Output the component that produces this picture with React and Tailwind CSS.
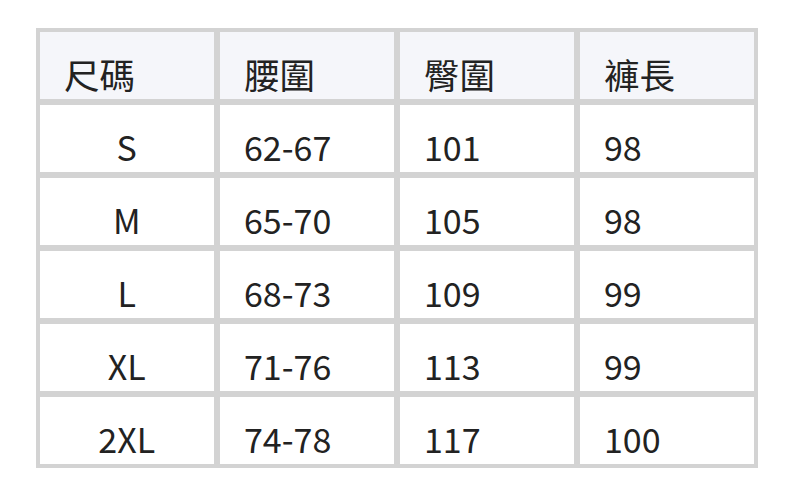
import React from "react";

const headers = ["尺碼", "腰圍", "臀圍", "褲長"];

const rows = [
  ["S", "62-67", "101", "98"],
  ["M", "65-70", "105", "98"],
  ["L", "68-73", "109", "99"],
  ["XL", "71-76", "113", "99"],
  ["2XL", "74-78", "117", "100"],
];

const App = () => {
  return (
    <div
      className="w-[792px] h-[495px] bg-white pl-[36px] pt-[28px]"
      style={{ fontFamily: '"Noto Sans CJK TC", "Noto Sans", sans-serif' }}
    >
      <div className="w-[721.5px] bg-[#d3d3d3] p-[4px] grid grid-cols-4 auto-rows-[66.5px] gap-[6.5px] text-[#222222] text-[34px] leading-[40px]">
        {headers.map((h) => (
          <div key={h} className="bg-[#f5f6fa] flex items-end pl-[24px] pb-[5px] text-[35.5px]">
            {h}
          </div>
        ))}
        {rows.map((r) =>
          r.map((cell, i) => (
            <div
              key={r[0] + i}
              className={
                i === 0
                  ? "bg-white flex items-end justify-center pb-[5px]"
                  : "bg-white flex items-end pl-[24px] pb-[5px]"
              }
            >
              {cell}
            </div>
          ))
        )}
      </div>
    </div>
  );
};

export default App;
